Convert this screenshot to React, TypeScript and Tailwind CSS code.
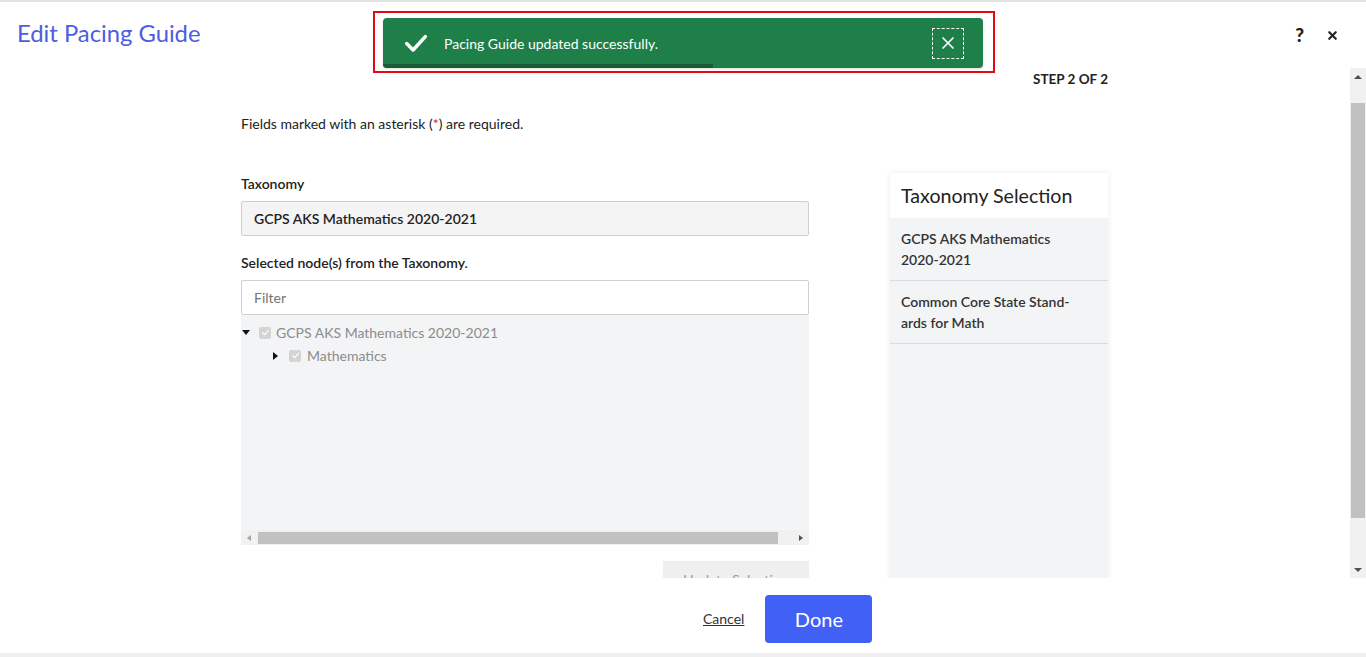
import { X } from 'lucide-react';

function Check({ className = '' }: { className?: string }) {
  return (
    <svg viewBox="0 0 24 24" className={className} fill="none" stroke="currentColor" strokeWidth={3} strokeLinecap="round" strokeLinejoin="round">
      <path d="M4 12.5l5.5 5.5L20 6.5" />
    </svg>
  );
}

function TreeCheckbox() {
  return (
    <span className="flex h-[12px] w-[12px] items-center justify-center rounded-[2px] bg-[#d4d4d4]">
      <Check className="h-[9px] w-[9px] text-white" />
    </span>
  );
}

function Toast() {
  return (
    <div className="absolute left-[373px] top-[11px] h-[62px] w-[622px] border-2 border-[#e00b14] pt-[5px] pl-[8px]">
      <div className="relative flex h-[50px] w-[600px] items-center overflow-hidden rounded-[4px] bg-[#1e7f48] shadow">
        <Check className="ml-[19px] h-[28px] w-[28px] text-white" />
        <span className="ml-[14px] text-[14px] text-white">Pacing Guide updated successfully.</span>
        <div className="ml-auto mr-[19px] flex h-[31px] w-[32px] items-center justify-center border border-dashed border-white">
          <X className="h-[20px] w-[20px] text-white" strokeWidth={2} />
        </div>
        {/* progress */}
        <div className="absolute bottom-0 left-0 h-[4px] w-[330px] bg-[#175c35]" />
      </div>
    </div>
  );
}

function HScrollbar() {
  return (
    <div className="flex h-[15px] items-center bg-[#f1f1f1]">
      <span className="ml-[6px] h-0 w-0 border-y-[3px] border-r-[4px] border-y-transparent border-r-[#a3a3a3]" />
      <div className="ml-[7px] h-[12px] w-[520px] bg-[#c1c1c1]" />
      <span className="ml-auto mr-[6px] h-0 w-0 border-y-[3px] border-l-[4px] border-y-transparent border-l-[#505050]" />
    </div>
  );
}

function VScrollbar() {
  return (
    <div className="flex w-[16px] flex-col items-center bg-[#f1f1f1]">
      <span className="mt-[7px] h-0 w-0 border-x-[4px] border-b-[4px] border-x-transparent border-b-[#505050]" />
      <div className="mt-[24px] h-[415px] w-[14px] bg-[#c1c1c1]" />
      <span className="mt-auto mb-[6px] h-0 w-0 border-x-[4px] border-t-[4px] border-x-transparent border-t-[#505050]" />
    </div>
  );
}

export default function App() {
  return (
    <div className="relative flex h-[657px] w-[1366px] flex-col overflow-hidden bg-white text-[#222]" style={{ fontFamily: 'Lato, "Open Sans", sans-serif' }}>
      {/* header */}
      <div className="flex h-[68px] shrink-0 items-start border-t-2 border-[#e3e3e3] px-[17px]">
        <h1 className="mt-[16px] text-[23.8px] leading-[30px] text-[#4b5de4]">Edit Pacing Guide</h1>
        <div className="ml-auto mr-[10px] mt-[22px] flex items-center gap-[22px]">
          <span className="text-[19px] font-black leading-[22px] text-[#222]">?</span>
          <X className="h-[13px] w-[13px] text-[#222]" strokeWidth={4} />
        </div>
      </div>

      {/* scroll area */}
      <div className="flex h-[510px] shrink-0">
        <div className="flex-1 overflow-hidden">
          <div className="ml-[241px] w-[867px]">
            <div className="pt-[3px] text-right text-[13.5px] font-bold leading-[16px]">STEP 2 OF 2</div>
            <p className="mt-[29px] text-[14px] leading-[16px]">
              Fields marked with an asterisk (<span className="text-[#d9262e]">*</span>) are required.
            </p>

            <div className="mt-[41px] flex gap-[81px]">
              {/* left column */}
              <div className="w-[568px] pt-[3px]">
                <label className="block text-[14px] font-semibold leading-[16px]">Taxonomy</label>
                <div className="mt-[9px] flex h-[35px] items-center rounded-[2px] border border-[#cfcfcf] bg-[#f4f4f5] px-[12px] text-[14px] font-semibold">
                  GCPS AKS Mathematics 2020-2021
                </div>

                <label className="mt-[19px] block text-[14px] font-semibold leading-[16px]">Selected node(s) from the Taxonomy.</label>
                <div className="mt-[9px] flex h-[35px] items-center rounded-[2px] border border-[#cfcfcf] bg-white px-[12px] text-[14px] text-[#757575]">
                  Filter
                </div>

                <div className="flex h-[230px] flex-col bg-[#f3f4f6]">
                  <div className="flex-1 pt-[6px] text-[14px] text-[#8c8c8c]">
                    <div className="flex h-[23px] items-center">
                      <span className="ml-[1px] h-0 w-0 border-x-[4px] border-t-[5px] border-x-transparent border-t-[#111]" />
                      <span className="ml-[9px]"><TreeCheckbox /></span>
                      <span className="ml-[5px]">GCPS AKS Mathematics 2020-2021</span>
                    </div>
                    <div className="flex h-[23px] items-center">
                      <span className="ml-[32px] h-0 w-0 border-y-[4px] border-l-[5px] border-y-transparent border-l-[#111]" />
                      <span className="ml-[11px]"><TreeCheckbox /></span>
                      <span className="ml-[6px]">Mathematics</span>
                    </div>
                  </div>
                  <HScrollbar />
                </div>

                <div className="mt-[16px] flex justify-end">
                  <button className="flex h-[36px] w-[146px] items-center justify-center bg-[#efefef] text-[14px] text-[#9a9a9a]">Update Selection</button>
                </div>
              </div>

              {/* right panel */}
              <div className="w-[218px] shadow-[0_0_6px_rgba(0,0,0,0.08)]">
                <div className="flex h-[45px] items-center bg-white px-[11px] text-[19.6px] text-[#222]">Taxonomy Selection</div>
                <div className="h-[400px] bg-[#f3f4f6]">
                  <div className="border-b border-[#dcdcdc] px-[11px] py-[10px] text-[14px] font-semibold leading-[21px] text-[#333]">
                    GCPS AKS Mathematics
                    <br />
                    2020-2021
                  </div>
                  <div className="border-b border-[#dcdcdc] px-[11px] py-[10px] text-[14px] font-semibold leading-[21px] text-[#333]">
                    Common Core State Stand-
                    <br />
                    ards for Math
                  </div>
                </div>
              </div>
            </div>
          </div>
        </div>
        <VScrollbar />
      </div>

      {/* footer */}
      <div className="flex h-[75px] shrink-0 items-center pl-[703px] pt-[6px]">
        <a className="text-[14px] text-[#333] underline">Cancel</a>
        <button className="ml-[21px] h-[48px] w-[107px] rounded-[4px] bg-[#4160f5] text-[20px] text-white">Done</button>
      </div>
      <div className="h-[4px] shrink-0 bg-[#efefef]" />

      <Toast />
    </div>
  );
}
